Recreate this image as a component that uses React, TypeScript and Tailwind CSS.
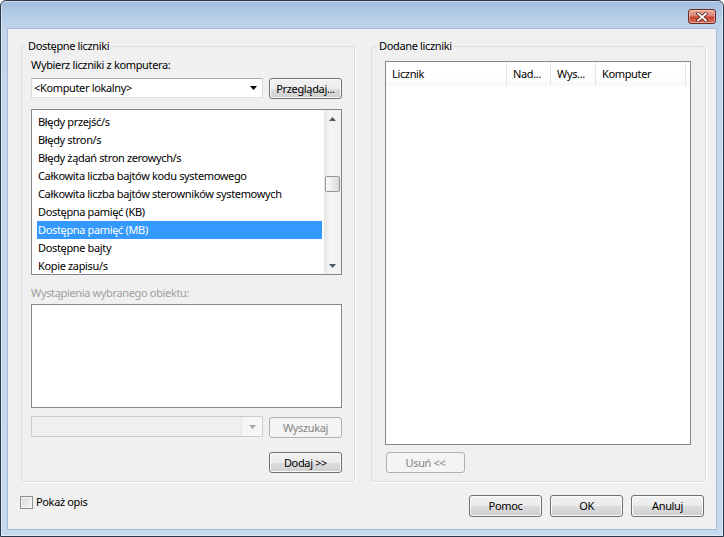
import React from 'react';

const counters = [
  'Błędy przejść/s',
  'Błędy stron/s',
  'Błędy żądań stron zerowych/s',
  'Całkowita liczba bajtów kodu systemowego',
  'Całkowita liczba bajtów sterowników systemowych',
  'Dostępna pamięć (KB)',
  'Dostępna pamięć (MB)',
  'Dostępne bajty',
  'Kopie zapisu/s',
];

const selected = 6;

const columns = [
  { label: 'Licznik', w: 'w-[121px]' },
  { label: 'Nad...', w: 'w-[44px]' },
  { label: 'Wys...', w: 'w-[45px]' },
  { label: 'Komputer', w: 'w-[90px]' },
];

function Button({ label, disabled = false, className = '' }: { label: string; disabled?: boolean; className?: string }) {
  if (disabled)
    return (
      <div className={`flex items-center justify-center rounded-[3px] border border-[#adb2b5] bg-[#f4f4f4] text-[#838383] ${className}`}>
        {label}
      </div>
    );
  return (
    <div
      className={`flex items-center justify-center rounded-[3px] border border-[#707070] bg-[linear-gradient(180deg,#f2f2f2_0%,#ebebeb_50%,#dddddd_51%,#cfcfcf_100%)] shadow-[inset_0_0_0_1px_#fbfbfb] ${className}`}
    >
      {label}
    </div>
  );
}

function Arrow({ color = '#000', up = false }: { color?: string; up?: boolean }) {
  return (
    <svg width="7" height="4" viewBox="0 0 7 4">
      <path d={up ? 'M0 4 L3.5 0 L7 4 Z' : 'M0 0 L7 0 L3.5 4 Z'} fill={color} />
    </svg>
  );
}

function CloseButton() {
  return (
    <div className="flex h-[15px] w-[28px] items-center justify-center rounded-[3px] border border-[#6d2a22] bg-[linear-gradient(180deg,#e9ad9f_0%,#d98371_45%,#c54532_55%,#d4705c_100%)] shadow-[inset_0_0_0_1px_rgba(255,220,210,0.5)]">
      <svg width="12" height="10" viewBox="0 0 12 10">
        <path d="M2 1.5 L10 8.5 M10 1.5 L2 8.5" stroke="#5a2019" strokeWidth="3.4" strokeLinecap="square" />
        <path d="M2 1.5 L10 8.5 M10 1.5 L2 8.5" stroke="#ffffff" strokeWidth="1.8" strokeLinecap="square" />
      </svg>
    </div>
  );
}

function Scrollbar() {
  return (
    <div className="flex w-[17px] flex-col bg-[linear-gradient(90deg,#e6e6e6,#f5f5f5_40%,#f0f0f0)]">
      <div className="flex h-[17px] items-center justify-center">
        <Arrow color="#505a66" up />
      </div>
      <div className="flex flex-1 flex-col px-[1px]">
        <div className="mt-[49px] h-[16px] rounded-[2px] border border-[#979797] bg-[linear-gradient(90deg,#fdfdfd,#e8e8e8_60%,#d8d8d8)]" />
      </div>
      <div className="flex h-[17px] items-center justify-center">
        <Arrow color="#505a66" />
      </div>
    </div>
  );
}

export default function App() {
  return (
    <div className="h-[537px] w-[724px] bg-white font-['Noto_Sans',sans-serif] text-[11px] leading-[16px] tracking-[-0.35px] text-black">
      <div className="flex h-[537px] w-[724px] flex-col rounded-t-[6px] border border-[#2a394b] bg-[linear-gradient(180deg,#a2bddd_0px,#b5cde8_16px,#c2d6ed_30px,#c5d9ef_100%)] px-[6px] pb-[6px] shadow-[inset_0_0_0_1px_rgba(255,255,255,0.45)]">
        <div className="flex h-[27px] items-start justify-end pr-[1px] pt-[8px]">
          <CloseButton />
        </div>

        <div className="flex flex-1 flex-col border border-[#a8bcd3] bg-[#f0f0f0]">
          <div className="flex pl-[13px] pt-[9px]">
            <fieldset className="h-[444px] w-[334px] rounded-[3px] border border-[#d5dfe5] pb-[8px] pl-[9px] shadow-[1px_1px_0_#fff]">
              <legend className="-ml-[5px] px-[2px]">Dostępne liczniki</legend>
              <div className="flex w-[311px] flex-col">
                <div className="mt-[3px]">Wybierz liczniki z komputera:</div>
                <div className="mt-[5px] flex items-start">
                  <div className="flex h-[20px] w-[232px] items-center justify-between border border-[#abadb3] border-b-[#dbdfe6] border-l-[#d6d9df] border-r-[#d6d9df] bg-white pl-[2px] pr-[5px]">
                    <span>&lt;Komputer lokalny&gt;</span>
                    <Arrow />
                  </div>
                  <Button label="Przeglądaj..." className="ml-[6px] h-[21px] w-[73px]" />
                </div>

                <div className="mt-[10px] flex h-[166px] border border-[#828790] bg-white">
                  <div className="ml-[5px] mr-[2px] flex-1 overflow-hidden pt-[3px]">
                    {counters.map((c, i) => (
                      <div
                        key={c}
                        className={`h-[18px] whitespace-nowrap pl-[1px] leading-[18px] ${i === selected ? 'bg-[#3399ff] text-white' : ''}`}
                      >
                        {c}
                      </div>
                    ))}
                  </div>
                  <Scrollbar />
                </div>

                <div className="mt-[10px] text-[#a0a0a0]">Wystąpienia wybranego obiektu:</div>
                <div className="mt-[3px] h-[104px] border border-[#828790] bg-white" />

                <div className="mt-[8px] flex h-[22px] items-start">
                  <div className="flex h-[21px] w-[232px] border border-[#c9ccd1] bg-[#efefef]">
                    <div className="flex-1" />
                    <div className="flex w-[21px] items-center justify-center border-l border-[#e4e4e4] bg-[#f6f6f6]">
                      <Arrow color="#a6a6a6" />
                    </div>
                  </div>
                  <Button label="Wyszukaj" disabled className="ml-[6px] mt-[1px] h-[21px] w-[73px]" />
                </div>

                <Button label="Dodaj >>" className="mt-[14px] h-[21px] w-[73px] self-end" />
              </div>
            </fieldset>

            <fieldset className="ml-[16px] h-[444px] w-[335px] rounded-[3px] border border-[#d5dfe5] pb-[8px] pl-[13px] shadow-[1px_1px_0_#fff]">
              <legend className="-ml-[8px] px-[2px]">Dodane liczniki</legend>
              <div className="mt-[7px] h-[384px] w-[306px] border border-[#828790] bg-white">
                <div className="flex h-[24px] bg-[linear-gradient(180deg,#ffffff,#ffffff_60%,#f7f8fa)]">
                  {columns.map(col => (
                    <div key={col.label} className={`${col.w} flex items-center border-r border-[#e5e5e5] pl-[6px]`}>
                      {col.label}
                    </div>
                  ))}
                </div>
              </div>
              <Button label="Usuń <<" disabled className="ml-[1px] mt-[7px] h-[21px] w-[79px]" />
            </fieldset>
          </div>

          <div className="mt-[11px] flex items-start justify-between pl-[12px] pr-[12px]">
            <div className="mt-[1px] flex items-center">
              <div className="h-[13px] w-[13px] border border-[#8e8f8f] bg-[linear-gradient(135deg,#d8d8d8,#f7f7f7)] shadow-[inset_0_0_0_1px_#f4f4f4]" />
              <span className="ml-[3px]">Pokaż opis</span>
            </div>
            <div className="mt-[2px] flex gap-[8px]">
              <Button label="Pomoc" className="h-[22px] w-[73px]" />
              <Button label="OK" className="h-[22px] w-[73px]" />
              <Button label="Anuluj" className="h-[22px] w-[73px]" />
            </div>
          </div>
        </div>
      </div>
    </div>
  );
}
